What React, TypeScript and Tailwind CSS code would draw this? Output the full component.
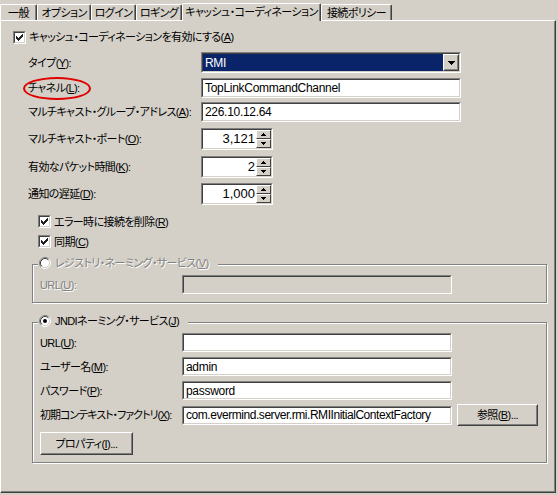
import React from 'react';

// classic Win2k colours
const FACE = 'bg-[#d4d0c8]';
const VALUE = 'text-[12px] tracking-[-0.3px]';

function Acc({ k }: { k: string }) {
  return (
    <>
      (<span className="underline underline-offset-[1px]">{k}</span>)
    </>
  );
}

function Sunken({ className = '', inner = 'bg-white', children }: { className?: string; inner?: string; children?: React.ReactNode }) {
  return (
    <div className={`border border-t-[#808080] border-l-[#808080] border-b-white border-r-white ${className}`}>
      <div className={`h-full w-full border border-t-[#404040] border-l-[#404040] border-b-[#d4d0c8] border-r-[#d4d0c8] flex items-center ${inner}`}>
        {children}
      </div>
    </div>
  );
}

function Raised({ className = '', children }: { className?: string; children?: React.ReactNode }) {
  return (
    <div className={`border border-t-white border-l-white border-b-[#404040] border-r-[#404040] ${FACE} ${className}`}>
      <div className="h-full w-full border border-t-[#d4d0c8] border-l-[#d4d0c8] border-b-[#808080] border-r-[#808080] flex items-center justify-center">
        {children}
      </div>
    </div>
  );
}

function TextField({
  value = '',
  w = 'w-[260px]',
  h = 'h-[20px]',
  disabled = false,
  valueClass = VALUE,
}: {
  value?: string;
  w?: string;
  h?: string;
  disabled?: boolean;
  valueClass?: string;
}) {
  return (
    <Sunken className={`${w} ${h} shrink-0`} inner={disabled ? 'bg-[#d4d0c8]' : 'bg-white'}>
      <span className={`pl-[2px] whitespace-nowrap ${valueClass}`}>{value}</span>
    </Sunken>
  );
}

function SpinArrow({ up }: { up?: boolean }) {
  return (
    <div className="flex-1 border border-t-white border-l-white border-b-[#404040] border-r-[#404040] bg-[#d4d0c8] flex items-center justify-center">
      <svg width="5" height="3" viewBox="0 0 5 3" shapeRendering="crispEdges">
        {up ? <path d="M2 0h1v1h1v1h1v1H0V2h1V1h1z" fill="#000" /> : <path d="M0 0h5v1H4v1H3v1H2V2H1V1H0z" fill="#000" />}
      </svg>
    </div>
  );
}

function Spinner({ value }: { value: string }) {
  return (
    <Sunken className="w-[72px] h-[22px]">
      <span className="flex-1 text-right pr-[1px] text-[13px] tracking-normal">{value}</span>
      <div className="flex flex-col h-full w-[15px]">
        <SpinArrow up />
        <SpinArrow />
      </div>
    </Sunken>
  );
}

function Check({ checked }: { checked?: boolean }) {
  return (
    <div className="w-[13px] h-[13px] shrink-0 border border-t-[#808080] border-l-[#808080] border-b-white border-r-white">
      <div className="w-full h-full border border-t-[#404040] border-l-[#404040] border-b-[#d4d0c8] border-r-[#d4d0c8] bg-white flex items-center justify-center">
        {checked && (
          <svg width="7" height="7" viewBox="0 0 7 7" shapeRendering="crispEdges">
            <path
              d="M6 0h1v1h-1z M5 1h2v1h-2z M0 2h1v1h-1z M4 2h3v1h-3z M0 3h2v1h-2z M3 3h3v1h-3z M0 4h5v1h-5z M1 5h3v1h-3z M2 6h1v1h-1z"
              fill="#222"
            />
          </svg>
        )}
      </div>
    </div>
  );
}

function Radio({ checked }: { checked?: boolean }) {
  return (
    <svg width="12" height="12" viewBox="0 0 12 12" className="shrink-0">
      <circle cx="6" cy="6" r="4.5" fill="#fff" />
      <path d="M2.11 9.89 A5.5 5.5 0 0 1 9.89 2.11" fill="none" stroke="#808080" />
      <path d="M9.89 2.11 A5.5 5.5 0 0 1 2.11 9.89" fill="none" stroke="#fff" />
      <path d="M2.82 9.18 A4.5 4.5 0 0 1 9.18 2.82" fill="none" stroke="#404040" />
      <path d="M9.18 2.82 A4.5 4.5 0 0 1 2.82 9.18" fill="none" stroke="#d4d0c8" />
      {checked && <circle cx="6" cy="6" r="2" fill="#000" />}
    </svg>
  );
}

function Group({ title, checked, className = '', children }: { title: React.ReactNode; checked?: boolean; className?: string; children?: React.ReactNode }) {
  return (
    <div className={`relative border border-[#808080] shadow-[1px_1px_0_#fff,inset_1px_1px_0_#fff] ${className}`}>
      <div className={`absolute -top-[9px] left-[5px] ${FACE} flex items-center gap-[4px] pl-[1px] pr-[9px] h-[14px]`}>
        <Radio checked={checked} />
        <span className="whitespace-nowrap">{title}</span>
      </div>
      {children}
    </div>
  );
}

const tabs = [
  { label: '一般', w: 'w-[37px]' },
  { label: 'オプション', w: 'w-[54px]' },
  { label: 'ログイン', w: 'w-[45px]' },
  { label: 'ロギング', w: 'w-[46px]' },
  { label: 'キャッシュ・コーディネーション', w: 'w-[139px]', active: true },
  { label: '接続ポリシー', w: 'w-[71px]' },
];

export default function App() {
  return (
    <div className={`w-[558px] h-[495px] ${FACE} text-black text-[11px] tracking-[-0.6px] leading-[14px] font-['Liberation_Sans','Noto_Sans_CJK_JP',sans-serif] [font-feature-settings:'palt'] overflow-hidden`}>
      {/* tab strip */}
      <div className="h-[20px] flex items-end">
        {tabs.map((t) =>
          t.active ? (
            <div
              key={t.label}
              className={`${t.w} h-[18px] -mb-px relative z-10 ${FACE} border-t border-l border-white border-r border-r-[#404040] shadow-[inset_-1px_0_0_#808080] rounded-t-[2px] flex items-center justify-center whitespace-nowrap pb-[1px]`}
            >
              {t.label}
            </div>
          ) : (
            <div
              key={t.label}
              className={`${t.w} h-[16px] border-t border-l border-white border-r border-r-[#404040] shadow-[inset_-1px_0_0_#808080] rounded-t-[2px] flex items-center justify-center whitespace-nowrap`}
            >
              {t.label}
            </div>
          )
        )}
      </div>

      {/* tab page */}
      <div className="w-[556px] h-[473px] border border-t-white border-l-white border-r-[#404040] border-b-[#404040] shadow-[inset_-1px_-1px_0_#808080] flex flex-col">
        <div className="mt-[9px] ml-[12px] h-[14px] flex items-center gap-[3px]">
          <Check checked />
          <span>
            キャッシュ・コーディネーションを有効にする<Acc k="A" />
          </span>
        </div>

        <div className="mt-[8px] ml-[27px] h-[21px] flex items-center">
          <span className="w-[173px] shrink-0">
            タイプ<Acc k="Y" />:
          </span>
          <Sunken className="w-[260px] h-[21px]">
            <div className={`flex-1 h-full bg-[#0a246a] text-white pl-[2px] flex items-center ${VALUE}`}>RMI</div>
            <Raised className="w-[16px] h-full">
              <svg width="7" height="4" viewBox="0 0 7 4" shapeRendering="crispEdges">
                <path d="M0 0h7v1H6v1H5v1H4v1H3V3H2V2H1V1H0z" fill="#000" />
              </svg>
            </Raised>
          </Sunken>
        </div>

        <div className="mt-[5px] ml-[27px] h-[20px] flex items-center">
          <span className="w-[173px] shrink-0">
            <span className="relative">
              チャネル<Acc k="L" />:
              <span className="absolute -left-[5px] -top-[5px] w-[68px] h-[23px] border-2 border-[#e00000] rounded-[50%]" />
            </span>
          </span>
          <TextField value="TopLinkCommandChannel" />
        </div>

        <div className="mt-[4px] ml-[27px] h-[20px] flex items-center">
          <span className="w-[173px] shrink-0 whitespace-nowrap">
            マルチキャスト・グループ・アドレス<Acc k="A" />:
          </span>
          <TextField value="226.10.12.64" />
        </div>

        <div className="mt-[6px] ml-[27px] h-[22px] flex items-center">
          <span className="w-[173px] shrink-0">
            マルチキャスト・ポート<Acc k="O" />:
          </span>
          <Spinner value="3,121" />
        </div>

        <div className="mt-[6px] ml-[27px] h-[22px] flex items-center">
          <span className="w-[173px] shrink-0">
            有効なパケット時間<Acc k="K" />:
          </span>
          <Spinner value="2" />
        </div>

        <div className="mt-[5px] ml-[27px] h-[22px] flex items-center">
          <span className="w-[173px] shrink-0">
            通知の遅延<Acc k="D" />:
          </span>
          <Spinner value="1,000" />
        </div>

        <div className="mt-[10px] ml-[37px] h-[13px] flex items-center gap-[3px]">
          <Check checked />
          <span>
            エラー時に接続を削除<Acc k="R" />
          </span>
        </div>

        <div className="mt-[7px] ml-[37px] h-[13px] flex items-center gap-[3px]">
          <Check checked />
          <span>
            同期<Acc k="C" />
          </span>
        </div>

        <Group
          className="mt-[16px] ml-[31px] w-[515px] h-[39px]"
          title={
            <span className="text-[#808080] [text-shadow:1px_1px_0_#fff]">
              レジストリ・ネーミング・サービス<Acc k="V" />
            </span>
          }
        >
          <div className="mt-[10px] ml-[7px] h-[19px] flex items-center">
            <span className="w-[142px] shrink-0 text-[#808080] [text-shadow:1px_1px_0_#fff]">
              URL<Acc k="U" />:
            </span>
            <TextField w="w-[270px]" h="h-[19px]" disabled />
          </div>
        </Group>

        <Group
          checked
          className="mt-[19px] ml-[31px] w-[515px] h-[141px]"
          title={
            <>
              JNDIネーミング・サービス<Acc k="J" />
            </>
          }
        >
          <div className="mt-[10px] ml-[7px] h-[19px] flex items-center">
            <span className="w-[142px] shrink-0">
              URL<Acc k="U" />:
            </span>
            <TextField w="w-[270px]" h="h-[19px]" />
          </div>
          <div className="mt-[5px] ml-[7px] h-[19px] flex items-center">
            <span className="w-[142px] shrink-0">
              ユーザー名<Acc k="M" />:
            </span>
            <TextField w="w-[270px]" h="h-[19px]" value="admin" />
          </div>
          <div className="mt-[5px] ml-[7px] h-[19px] flex items-center">
            <span className="w-[142px] shrink-0">
              パスワード<Acc k="P" />:
            </span>
            <TextField w="w-[270px]" h="h-[19px]" value="password" />
          </div>
          <div className="mt-[4px] ml-[7px] h-[22px] flex items-center">
            <span className="w-[142px] shrink-0 whitespace-nowrap tracking-[-1px]">
              初期コンテキスト・ファクトリ<Acc k="X" />:
            </span>
            <TextField
              w="w-[270px]"
              h="h-[19px]"
              value="com.evermind.server.rmi.RMIInitialContextFactory"
              valueClass="text-[12px] tracking-[-0.45px]"
            />
            <Raised className="ml-[5px] w-[81px] h-[22px]">
              <span>
                参照<Acc k="B" />...
              </span>
            </Raised>
          </div>
          <Raised className="mt-[6px] ml-[7px] w-[93px] h-[23px]">
            <span>
              プロパティ<Acc k="I" />...
            </span>
          </Raised>
        </Group>
      </div>
    </div>
  );
}
